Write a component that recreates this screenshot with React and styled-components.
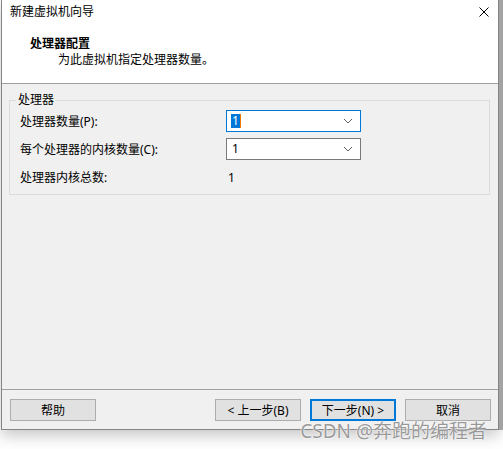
import React from 'react';
import styled, { createGlobalStyle } from 'styled-components';

const GlobalStyle = createGlobalStyle`
  html, body {
    margin: 0;
    padding: 0;
    background: #fff;
  }
  body {
    font-family: 'Noto Sans', 'Noto Sans CJK SC', sans-serif;
    font-size: 12px;
    color: #000;
  }
`;

const Page = styled.div`
  position: relative;
  width: 503px;
  height: 449px;
  display: flex;
  align-items: flex-start;
  overflow: hidden;
  background: #fff;
`;

const Window = styled.div`
  margin-left: 1px;
  width: 496px;
  height: 429px;
  display: flex;
  flex-direction: column;
  border-left: 1px solid #858585;
  border-right: 1px solid #858585;
  border-bottom: 1px solid #858585;
  box-shadow: 0 6px 14px rgba(0, 0, 0, 0.22);
  background: #f0f0f0;
`;

const Edge = styled.div`
  width: 4px;
  height: 430px;
  background: #a3a3a3;
`;

const TitleBar = styled.div`
  height: 24px;
  display: flex;
  align-items: center;
  justify-content: space-between;
  padding: 0 9px 0 8px;
  background: #fff;
  line-height: 16px;
`;

const Close = styled.svg`
  width: 10px;
  height: 10px;
`;

const Header = styled.div`
  background: #fff;
  padding: 12px 0 15px 28px;
  border-bottom: 1px solid #a0a0a0;
  line-height: 16px;
`;

const HeaderTitle = styled.div`
  font-weight: bold;
`;

const HeaderText = styled.div`
  padding-left: 28px;
`;

const Body = styled.div`
  flex: 1;
  padding: 16px 8px 0 7px;
`;

const GroupBox = styled.div`
  position: relative;
  border: 1px solid #dcdcdc;
  padding: 9px 10px 6px;
`;

const Legend = styled.span`
  position: absolute;
  top: -9px;
  left: 6px;
  padding: 0 2px;
  background: #f0f0f0;
  line-height: 16px;
`;

const Rows = styled.div`
  display: grid;
  grid-template-columns: 206px 135px;
  grid-auto-rows: 22px;
  row-gap: 6px;
  align-items: center;
`;

const Combo = styled.div`
  height: 22px;
  box-sizing: border-box;
  display: flex;
  align-items: center;
  justify-content: space-between;
  padding: 0 7px 0 4px;
  background: #fff;
  border: 1px solid ${p => (p.$focused ? '#0078d7' : '#7a7a7a')};
`;

const Value = styled.span`
  line-height: 14px;
  padding: 0 1px;
  color: ${p => (p.$selected ? '#fff' : '#000')};
  background: ${p => (p.$selected ? '#0078d7' : 'transparent')};
  border-right: ${p => (p.$selected ? '1px solid #f07a00' : 'none')};
`;

const Total = styled.span`
  padding-left: 2px;
`;

const Chevron = styled.svg`
  width: 10px;
  height: 6px;
`;

const Footer = styled.div`
  border-top: 1px solid #a0a0a0;
  display: flex;
  align-items: center;
  padding: 9px 6px 8px 8px;
`;

const Button = styled.button`
  width: 86px;
  height: 22px;
  box-sizing: border-box;
  margin: 0;
  margin-left: ${p => p.$gap || 0}px;
  padding: 0;
  font: inherit;
  color: #000;
  background: #e1e1e1;
  border: ${p => (p.$primary ? '2px solid #0078d7' : '1px solid #adadad')};
`;

const Watermark = styled.div`
  position: absolute;
  right: 16px;
  bottom: 7px;
  font-family: 'Noto Sans', 'Noto Sans CJK SC', sans-serif;
  font-size: 19px;
  line-height: 22px;
  color: rgba(120, 120, 120, 0.75);
  text-shadow: 0 0 2px #fff, 0 0 1px #fff;
`;

const ChevronIcon = () => (
  <Chevron viewBox="0 0 10 6">
    <polyline points="1,1 5,5 9,1" fill="none" stroke="#606060" strokeWidth="1" />
  </Chevron>
);

const App = () => {
  return (
    <Page>
      <GlobalStyle />
      <Window>
        <TitleBar>
          <span>新建虚拟机向导</span>
          <Close viewBox="0 0 10 10">
            <path d="M0.5 0.5L9.5 9.5M9.5 0.5L0.5 9.5" stroke="#000" strokeWidth="1" />
          </Close>
        </TitleBar>
        <Header>
          <HeaderTitle>处理器配置</HeaderTitle>
          <HeaderText>为此虚拟机指定处理器数量。</HeaderText>
        </Header>
        <Body>
          <GroupBox>
            <Legend>处理器</Legend>
            <Rows>
              <span>处理器数量(P):</span>
              <Combo $focused>
                <Value $selected>1</Value>
                <ChevronIcon />
              </Combo>
              <span>每个处理器的内核数量(C):</span>
              <Combo>
                <Value>1</Value>
                <ChevronIcon />
              </Combo>
              <span>处理器内核总数:</span>
              <Total>1</Total>
            </Rows>
          </GroupBox>
        </Body>
        <Footer>
          <Button>帮助</Button>
          <Button $gap={119}>&lt; 上一步(B)</Button>
          <Button $gap={9} $primary>下一步(N) &gt;</Button>
          <Button $gap={9}>取消</Button>
        </Footer>
      </Window>
      <Edge />
      <Watermark>CSDN @奔跑的编程者</Watermark>
    </Page>
  );
};

export default App;
